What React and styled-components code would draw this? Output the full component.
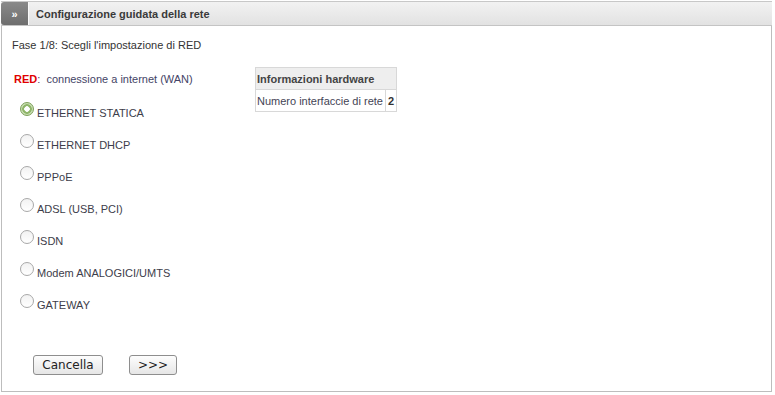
import React, { useState } from 'react';
import styled, { createGlobalStyle } from 'styled-components';

const GlobalStyle = createGlobalStyle`
  html, body {
    margin: 0;
    padding: 0;
    background: #fff;
  }
  body {
    font-family: "Liberation Sans", Arial, sans-serif;
    font-size: 11px;
    color: #333;
  }
`;

const options = [
  'ETHERNET STATICA',
  'ETHERNET DHCP',
  'PPPoE',
  'ADSL (USB, PCI)',
  'ISDN',
  'Modem ANALOGICI/UMTS',
  'GATEWAY',
];

const Frame = styled.div`
  margin: 1px 1px 0 1px;
  width: 771px;
  height: 391px;
  border: 1px solid #bdbdbd;
  border-top: none;
  box-sizing: border-box;
  display: flex;
  flex-direction: column;
`;

const Header = styled.div`
  height: 23px;
  display: flex;
  align-items: stretch;
  background: linear-gradient(#f2f2f2, #e2e2e2);
  border-top: 1px solid #c8c8c8;
  border-bottom: 1px solid #c4c4c4;
  margin: 0 -1px;
`;

const Toggle = styled.div`
  width: 27px;
  background: linear-gradient(#8a8a8a, #6e6e6e);
  border-radius: 3px 0 0 3px;
  color: #fff;
  font-weight: bold;
  font-size: 11px;
  display: flex;
  align-items: center;
  justify-content: center;
  border-right: 1px solid #fafafa;
`;

const Title = styled.div`
  padding-left: 7px;
  display: flex;
  align-items: center;
  font-weight: bold;
  font-size: 11px;
  color: #3a3a3a;
`;

const Body = styled.div`
  flex: 1;
  padding: 11px 10px 0 10px;
  display: flex;
  flex-direction: column;
`;

const Step = styled.div`
  height: 16px;
  line-height: 16px;
`;

const Columns = styled.div`
  display: flex;
  margin-top: 14px;
`;

const Choices = styled.div`
  width: 241px;
  padding-left: 2px;
`;

const Lead = styled.div`
  line-height: 14px;
  margin-top: 5px;
  color: #444466;
`;

const Red = styled.span`
  color: #e00000;
  font-weight: bold;
`;

const OptionList = styled.div`
  margin-top: 17px;
  display: flex;
  flex-direction: column;
`;

const Option = styled.label`
  height: 32px;
  display: flex;
  align-items: flex-start;
  padding-left: 6px;
  cursor: pointer;
`;

const Dot = styled.span`
  width: 12px;
  height: 12px;
  border-radius: 50%;
  border: 1px solid ${p => (p.$on ? '#7da05a' : '#a8a8a8')};
  background: ${p => (p.$on ? 'radial-gradient(circle, #fff 0 2.5px, #8fb56a 3px 4.5px, #c7ddb0 5px)' : 'linear-gradient(#f2f2f2, #fff)')};
  flex-shrink: 0;
  margin-top: -1px;
`;

const OptionText = styled.span`
  margin-left: 3px;
  margin-top: 3px;
  line-height: 14px;
  color: #3d3d4a;
`;

const HwTable = styled.table`
  border-collapse: collapse;
  align-self: flex-start;
  td, th {
    border: 1px solid #d8d8d8;
    padding: 0 2px 0 1px;
    height: 21px;
    text-align: left;
    font-size: 11px;
  }
  th {
    background: #eeeeee;
    font-weight: bold;
    color: #444;
  }
  td {
    color: #445;
  }
  td + td {
    padding: 0 2px;
    font-weight: bold;
    color: #333;
  }
`;

const Buttons = styled.div`
  display: flex;
  gap: 26px;
  margin-top: 28px;
  padding-left: 21px;
`;

const Button = styled.button`
  height: 20px;
  width: ${p => p.$w}px;
  padding: 0;
  font-family: "DejaVu Sans", sans-serif;
  font-size: 12px;
  color: #222;
  background: linear-gradient(#fdfdfd, #e6e6e6);
  border: 1px solid #8e8e8e;
  border-radius: 3px;
  cursor: pointer;
`;

export default function App() {
  const [selected, setSelected] = useState(0);

  return (
    <>
      <GlobalStyle />
      <Frame>
        <Header>
          <Toggle>»</Toggle>
          <Title>Configurazione guidata della rete</Title>
        </Header>
        <Body>
          <Step>Fase 1/8: Scegli l'impostazione di RED</Step>
          <Columns>
            <Choices>
              <Lead>
                <Red>RED</Red>:&nbsp; connessione a internet (WAN)
              </Lead>
              <OptionList>
                {options.map((o, i) => (
                  <Option key={o} onClick={() => setSelected(i)}>
                    <Dot $on={selected === i} />
                    <OptionText>{o}</OptionText>
                  </Option>
                ))}
              </OptionList>
            </Choices>
            <HwTable>
              <tbody>
                <tr>
                  <th colSpan={2}>Informazioni hardware</th>
                </tr>
                <tr>
                  <td>Numero interfaccie di rete</td>
                  <td>2</td>
                </tr>
              </tbody>
            </HwTable>
          </Columns>
          <Buttons>
            <Button $w={70}>Cancella</Button>
            <Button $w={48}>&gt;&gt;&gt;</Button>
          </Buttons>
        </Body>
      </Frame>
    </>
  );
}
